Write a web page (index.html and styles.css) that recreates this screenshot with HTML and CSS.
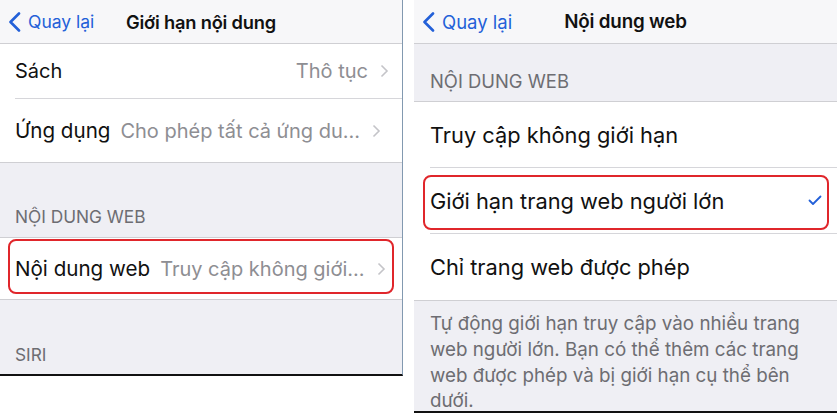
FILE: index.html
```html
<!DOCTYPE html>
<html lang="vi">
<head>
	<meta charset="UTF-8">
	<title>Giới hạn nội dung</title>
	<link rel="stylesheet" href="styles.css">
</head>
<body>
	<div class="screen screen-left">
		<div class="nav">
			<a href="javascript:;" class="back">
				<svg width="14" height="20" viewBox="0 0 14 20"><polyline points="11,1.5 2.5,10 11,18.5" fill="none" stroke="#2360d8" stroke-width="2.6" stroke-linecap="round" stroke-linejoin="round"/></svg>
				<span>Quay lại</span>
			</a>
			<div class="title">Giới hạn nội dung</div>
		</div>
		<ul class="group">
			<li class="row row-sach">
				<span class="label">Sách</span>
				<span class="value">Thô tục</span>
				<svg class="chev" width="9" height="14" viewBox="0 0 9 14"><polyline points="1.5,1.5 7,7 1.5,12.5" fill="none" stroke="#c4c4c8" stroke-width="1.6"/></svg>
			</li>
			<li class="row row-app">
				<span class="label">Ứng dụng</span>
				<span class="value">Cho phép tất cả ứng du...</span>
				<svg class="chev" width="9" height="14" viewBox="0 0 9 14"><polyline points="1.5,1.5 7,7 1.5,12.5" fill="none" stroke="#c4c4c8" stroke-width="1.6"/></svg>
			</li>
		</ul>
		<div class="head head-web">NỘI DUNG WEB</div>
		<ul class="group">
			<li class="row row-web">
				<span class="label">Nội dung web</span>
				<span class="value">Truy cập không giới...</span>
				<svg class="chev" width="9" height="14" viewBox="0 0 9 14"><polyline points="1.5,1.5 7,7 1.5,12.5" fill="none" stroke="#c4c4c8" stroke-width="1.6"/></svg>
				<span class="mark mark-left"></span>
			</li>
		</ul>
		<div class="head head-siri">SIRI</div>
	</div>

	<div class="screen screen-right">
		<div class="nav">
			<a href="javascript:;" class="back">
				<svg width="14" height="20" viewBox="0 0 14 20"><polyline points="11,1.5 2.5,10 11,18.5" fill="none" stroke="#2360d8" stroke-width="2.6" stroke-linecap="round" stroke-linejoin="round"/></svg>
				<span>Quay lại</span>
			</a>
			<div class="title">Nội dung web</div>
		</div>
		<div class="head head-top">NỘI DUNG WEB</div>
		<ul class="group">
			<li class="row opt">
				<span class="label">Truy cập không giới hạn</span>
			</li>
			<li class="row opt">
				<span class="label">Giới hạn trang web người lớn</span>
				<svg class="check" width="14" height="11" viewBox="0 0 14 11"><polyline points="1.5,5.5 5,9 12.5,1.5" fill="none" stroke="#2360d8" stroke-width="1.8" stroke-linecap="round" stroke-linejoin="round"/></svg>
				<span class="mark mark-right"></span>
			</li>
			<li class="row opt">
				<span class="label">Chỉ trang web được phép</span>
			</li>
		</ul>
		<p class="foot">Tự động giới hạn truy cập vào nhiều trang web người lớn. Bạn có thể thêm các trang web được phép và bị giới hạn cụ thể bên dưới.</p>
	</div>
</body>
</html>
```

FILE: styles.css
```css
*{padding:0; margin:0; list-style:none; box-sizing:border-box;}
body{background:#fff; font-family:Inter, "Liberation Sans", sans-serif; color:#111; display:flex; align-items:flex-start; gap:11px;}
a{text-decoration:none;}

.screen{background:#efeff4; overflow:hidden; display:flex; flex-direction:column;}
.screen-left{width:403px; height:376px; border-right:1px solid #8299b0; border-bottom:2px solid #111;}
.screen-right{width:423px; height:413px; border-bottom:2px solid #111;}

.nav{height:44px; background:#f7f7f9; border-bottom:1px solid #cfcfd3; position:relative; display:flex; align-items:center; justify-content:center; flex-shrink:0;}
.back{position:absolute; left:8px; top:11px; display:flex; align-items:center; gap:6px; color:#2360d8; font-size:17.5px;}
.back svg{display:block;}
.title{font-size:18.3px; font-weight:600; color:#111; letter-spacing:-0.2px;}
.screen-right .back{font-size:18.5px;}
.screen-right .title{font-size:18.8px;}

.group{background:#fff; border-bottom:1px solid #cfcfd3;}
.row{position:relative; display:flex; align-items:center; margin-left:15px; padding-right:13px; border-bottom:1px solid #d6d6da; font-size:20px;}
.row:last-child{border-bottom:none;}
.row-sach{height:55px;}
.row-app{height:63px;}
.row-web{height:61px;}
.label{color:#111; white-space:nowrap;}
.row-app .label, .row-web .label{font-size:20.6px;}
.value{color:#8e8e93; margin-left:auto; margin-right:12px; white-space:nowrap;}
.row-app .value{margin-left:10px;}
.row-web .value{margin-left:10px;}
.chev{display:block; flex-shrink:0;}

.head{font-size:17.3px; color:#6d6d72; padding-left:15px; flex-shrink:0;}
.head-web{height:75px; border-bottom:1px solid #cfcfd3; display:flex; align-items:flex-end; padding-bottom:10px;}
.head-siri{height:75px; display:flex; align-items:flex-end; padding-bottom:10px;}
.head-top{height:58px; border-bottom:1px solid #cfcfd3; display:flex; align-items:center; padding-top:16px; padding-left:16px; font-size:18.4px;}

.screen-right .row{margin-left:16px;}
.opt{height:66px; font-size:21.8px;}
.check{margin-left:auto; margin-right:2px;}

.mark{position:absolute; border:2px solid #e0262b; border-radius:8px;}
.mark-left{left:-7px; right:8px; top:1px; bottom:5px;}
.mark-right{left:-7px; right:8px; top:7px; bottom:3px;}

.foot{font-size:18.8px; line-height:25.8px; color:#6d6d72; padding:10px 24px 0 16px;}
```
